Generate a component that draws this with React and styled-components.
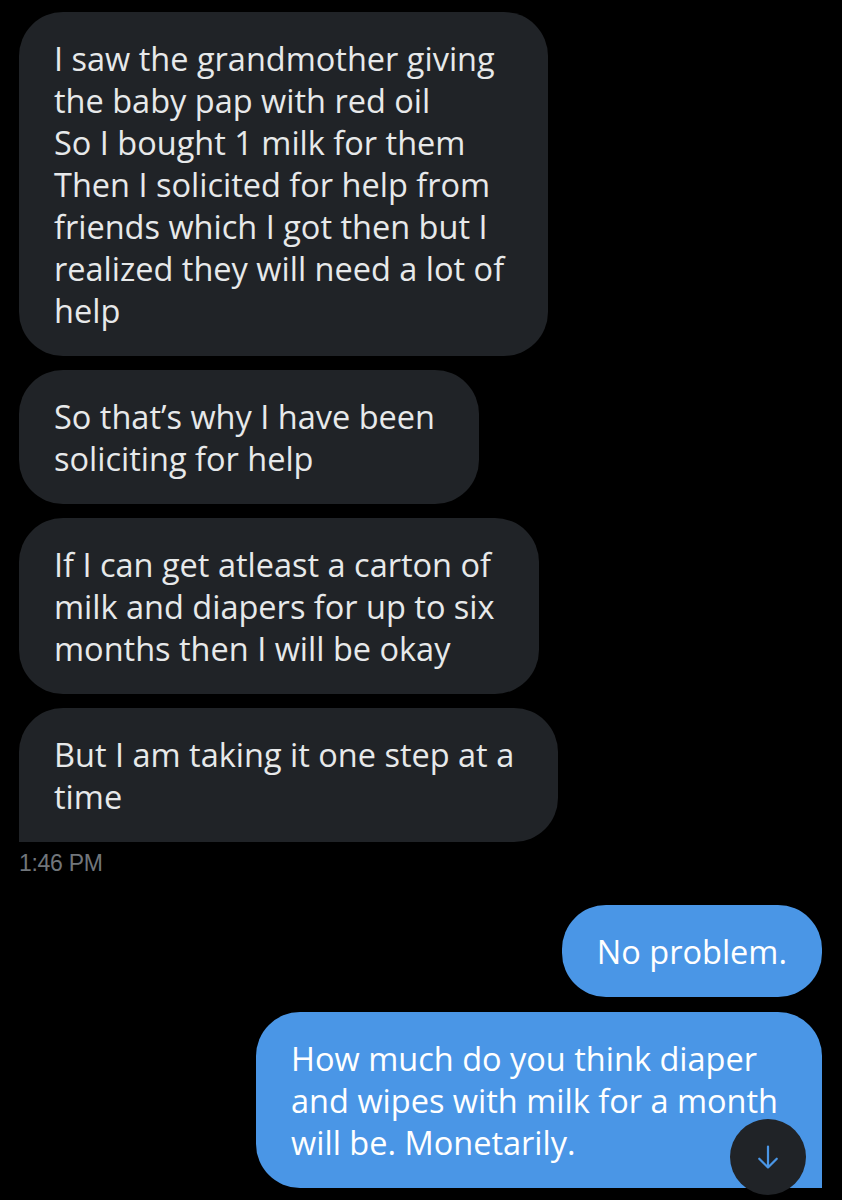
import styled, { createGlobalStyle } from "styled-components";

const GlobalStyle = createGlobalStyle`
  html, body {
    margin: 0;
    padding: 0;
    background: #000;
  }
  body {
    font-family: "Open Sans", "Noto Sans", sans-serif;
    -webkit-font-smoothing: antialiased;
  }
`;

const Screen = styled.div`
  width: 842px;
  height: 1200px;
  overflow: hidden;
  background: #000;
  box-sizing: border-box;
  padding: 12px 20px 0 19px;
  display: flex;
  flex-direction: column;
`;

const Group = styled.div`
  display: flex;
  flex-direction: column;
  align-items: ${(p) => (p.$mine ? "flex-end" : "flex-start")};
  gap: ${(p) => (p.$mine ? "15px" : "14px")};
`;

// multi-line bubbles keep a bit more room on the right
const Bubble = styled.div`
  position: relative;
  box-sizing: border-box;
  padding: 26px ${(p) => (p.$multi ? "44px" : "35px")} 24px 35px;
  border-radius: 44px;
  ${(p) => p.$last && !p.$mine && "border-bottom-left-radius: 0;"}
  ${(p) => p.$last && p.$mine && "border-bottom-right-radius: 0;"}
  background: ${(p) => (p.$mine ? "#4a96e6" : "#202327")};
  color: ${(p) => (p.$mine ? "#ffffff" : "#e7e9ea")};
  font-size: 32.5px;
  line-height: 42px;
`;

const Line = styled.span`
  display: block;
  white-space: nowrap;
`;

const Time = styled.div`
  margin-top: 7px;
  color: #71767b;
  font-family: "Liberation Sans", Arial, sans-serif;
  font-size: 23px;
  line-height: 28px;
  letter-spacing: -0.3px;
`;

const Spacer = styled.div`
  height: 28px;
  flex-shrink: 0;
`;

const ScrollButton = styled.div`
  position: absolute;
  right: 16px;
  top: 107px;
  width: 76px;
  height: 76px;
  border-radius: 50%;
  background: #202327;
  display: flex;
  align-items: center;
  justify-content: center;
`;

const received = [
  [
    "I saw the grandmother giving",
    "the baby pap with red oil",
    "So I bought 1 milk for them",
    "Then I solicited for help from",
    "friends which I got then but I",
    "realized they will need a lot of",
    "help",
  ],
  ["So that\u2019s why I have been", "soliciting for help"],
  [
    "If I can get atleast a carton of",
    "milk and diapers for up to six",
    "months then I will be okay",
  ],
  ["But I am taking it one step at a", "time"],
];

const sent = [
  ["No problem."],
  [
    "How much do you think diaper",
    "and wipes with milk for a month",
    "will be. Monetarily.",
  ],
];

function ArrowDown() {
  return (
    <svg width="28" height="28" viewBox="0 0 24 24" fill="none">
      <path
        d="M12 3v18M4.5 13.5L12 21l7.5-7.5"
        stroke="#4a96e6"
        strokeWidth="1.9"
        strokeLinecap="round"
        strokeLinejoin="round"
      />
    </svg>
  );
}

export default function App() {
  return (
    <>
      <GlobalStyle />
      <Screen>
        <Group>
          {received.map((lines, i) => (
            <Bubble
              key={i}
              $multi={lines.length > 1}
              $last={i === received.length - 1}
            >
              {lines.map((l) => (
                <Line key={l}>{l}</Line>
              ))}
            </Bubble>
          ))}
        </Group>
        <Time>1:46 PM</Time>
        <Spacer />
        <Group $mine>
          {sent.map((lines, i) => (
            <Bubble
              key={i}
              $mine
              $multi={lines.length > 1}
              $last={i === sent.length - 1}
            >
              {lines.map((l) => (
                <Line key={l}>{l}</Line>
              ))}
              {i === sent.length - 1 && (
                <ScrollButton>
                  <ArrowDown />
                </ScrollButton>
              )}
            </Bubble>
          ))}
        </Group>
      </Screen>
    </>
  );
}
